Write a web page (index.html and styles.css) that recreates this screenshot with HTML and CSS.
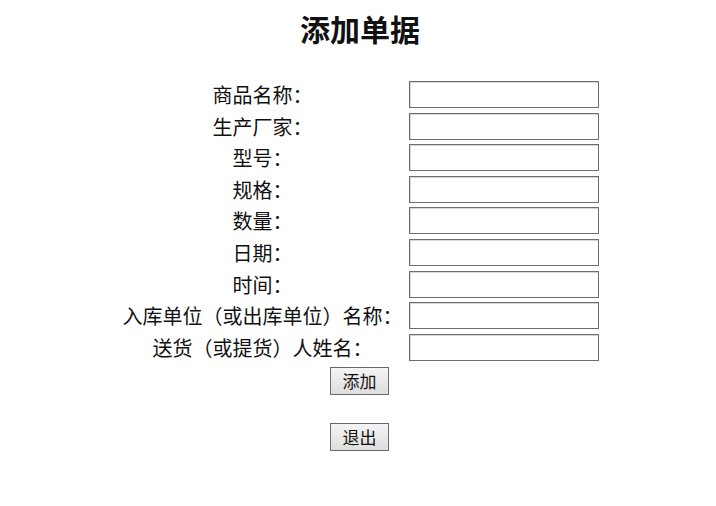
FILE: index.html
```html
<!DOCTYPE html>
<html lang="zh-CN">
<head>
    <meta charset="UTF-8">
    <meta name="viewport" content="width=device-width, initial-scale=1.0">
    <title>添加单据</title>
    <link rel="stylesheet" href="styles.css">
</head>
<body>
    <div class="container">
        <h1 class="title">添加单据</h1>

        <form class="bill-form">
            <div class="fields">
                <label class="field-label" for="name">商品名称：</label>
                <input class="field-input" type="text" id="name">

                <label class="field-label" for="maker">生产厂家：</label>
                <input class="field-input" type="text" id="maker">

                <label class="field-label" for="model">型号：</label>
                <input class="field-input" type="text" id="model">

                <label class="field-label" for="spec">规格：</label>
                <input class="field-input" type="text" id="spec">

                <label class="field-label" for="amount">数量：</label>
                <input class="field-input" type="text" id="amount">

                <label class="field-label" for="date">日期：</label>
                <input class="field-input" type="text" id="date">

                <label class="field-label" for="time">时间：</label>
                <input class="field-input" type="text" id="time">

                <label class="field-label" for="unit">入库单位（或出库单位）名称：</label>
                <input class="field-input" type="text" id="unit">

                <label class="field-label" for="person">送货（或提货）人姓名：</label>
                <input class="field-input" type="text" id="person">
            </div>

            <div class="actions">
                <button type="button" class="form-button">添加</button>
                <button type="button" class="form-button">退出</button>
            </div>
        </form>
    </div>
</body>
</html>
```

FILE: styles.css
```css
:root {
    --text-color: #111111;
    --input-border: #6e6e6e;
    --button-border: #6a6a6a;
}

body {
    margin: 0;
    padding: 0;
    background: #ffffff;
    color: var(--text-color);
    font-family: "Liberation Serif", "Noto Sans CJK SC", serif;
}

.container {
    width: 716px;
    padding-top: 13px;
}

.title {
    margin: 0 0 32px 4px;
    text-align: center;
    font-size: 30px;
    line-height: 36px;
    font-weight: 700;
}

.bill-form {
    margin-left: 3px;
}

.fields {
    display: grid;
    grid-template-columns: 284px 190px;
    grid-auto-rows: 27px;
    column-gap: 4px;
    row-gap: 4.6px;
    justify-content: center;
}

.field-label {
    display: flex;
    align-items: center;
    justify-content: center;
    font-size: 20px;
    white-space: nowrap;
}

.field-input {
    box-sizing: border-box;
    width: 190px;
    height: 27px;
    margin: 0;
    border: 1px solid var(--input-border);
    box-shadow: inset 1px 1px 0 #d6d6d6;
    background: #ffffff;
}

.actions {
    display: flex;
    flex-direction: column;
    align-items: center;
    gap: 28px;
    padding-top: 6px;
}

.form-button {
    width: 59px;
    height: 28px;
    padding: 0;
    border: 1px solid var(--button-border);
    background: linear-gradient(#f4f4f4, #dedede);
    font-family: "Noto Sans CJK SC", sans-serif;
    font-size: 17px;
    color: #111111;
}
```
